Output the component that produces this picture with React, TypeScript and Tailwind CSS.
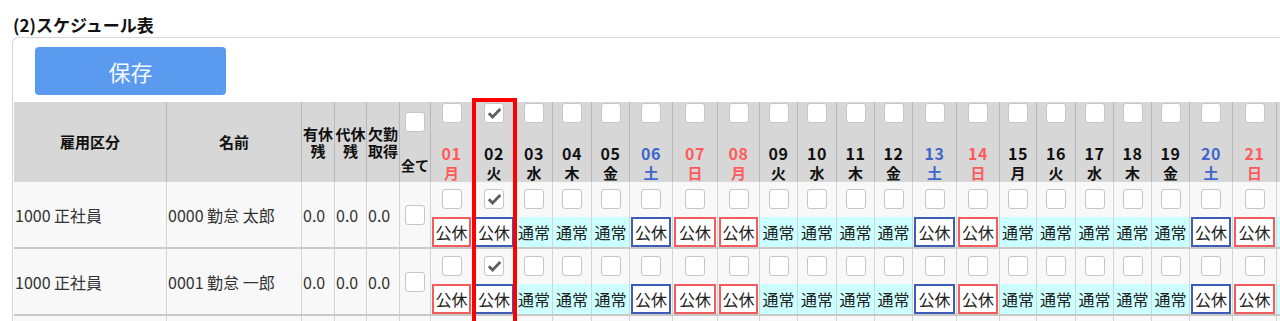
import React from "react";

type Kind = "red" | "blue" | "normal";
type Day = { d: string; w: string; color: string; kind: Kind; width: string; checked?: boolean };

const days: Day[] = [
  { d: "01", w: "月", color: "text-[#ff5a5a]", kind: "red", width: "w-[42px]" },
  { d: "02", w: "火", color: "text-[#111111]", kind: "blue", width: "w-[43px]", checked: true },
  { d: "03", w: "水", color: "text-[#111111]", kind: "normal", width: "w-[37px]" },
  { d: "04", w: "木", color: "text-[#111111]", kind: "normal", width: "w-[39px]" },
  { d: "05", w: "金", color: "text-[#111111]", kind: "normal", width: "w-[38px]" },
  { d: "06", w: "土", color: "text-[#3d66cc]", kind: "blue", width: "w-[43px]" },
  { d: "07", w: "日", color: "text-[#ff5a5a]", kind: "red", width: "w-[45px]" },
  { d: "08", w: "月", color: "text-[#ff5a5a]", kind: "red", width: "w-[42px]" },
  { d: "09", w: "火", color: "text-[#111111]", kind: "normal", width: "w-[38px]" },
  { d: "10", w: "水", color: "text-[#111111]", kind: "normal", width: "w-[39px]" },
  { d: "11", w: "木", color: "text-[#111111]", kind: "normal", width: "w-[38px]" },
  { d: "12", w: "金", color: "text-[#111111]", kind: "normal", width: "w-[38px]" },
  { d: "13", w: "土", color: "text-[#3d66cc]", kind: "blue", width: "w-[44px]" },
  { d: "14", w: "日", color: "text-[#ff5a5a]", kind: "red", width: "w-[43px]" },
  { d: "15", w: "月", color: "text-[#111111]", kind: "normal", width: "w-[37px]" },
  { d: "16", w: "火", color: "text-[#111111]", kind: "normal", width: "w-[39px]" },
  { d: "17", w: "水", color: "text-[#111111]", kind: "normal", width: "w-[38px]" },
  { d: "18", w: "木", color: "text-[#111111]", kind: "normal", width: "w-[38px]" },
  { d: "19", w: "金", color: "text-[#111111]", kind: "normal", width: "w-[38px]" },
  { d: "20", w: "土", color: "text-[#3d66cc]", kind: "blue", width: "w-[43px]" },
  { d: "21", w: "日", color: "text-[#ff5a5a]", kind: "red", width: "w-[44px]" },
  { d: "22", w: "月", color: "text-[#111111]", kind: "normal", width: "w-[38px]" },
];

const rows = [
  { kbn: "1000 正社員", name: "0000 勤怠 太郎" },
  { kbn: "1000 正社員", name: "0001 勤怠 一郎" },
];

function Check({ checked }: { checked?: boolean }) {
  return (
    <div className="w-[20px] h-[20px] shrink-0 bg-white border border-[#c6c6c6] rounded-[3px] flex items-center justify-center">
      {checked && (
        <svg width="15" height="13" viewBox="0 0 15 13">
          <path d="M0.8 7.2 L2.9 5.2 L5.6 7.9 L12.2 1 L14.3 3 L5.6 11.9 Z" fill="#5e5e5e" />
        </svg>
      )}
    </div>
  );
}

export default function App() {
  return (
    <div className="w-[1280px] h-[321px] overflow-hidden bg-white relative font-['Noto_Sans_CJK_JP','Noto_Sans',sans-serif] text-[#333]">
      <div className="pl-[13px] pt-[13px] h-[37px] text-[17px] font-bold leading-[24px] text-[#111]">(2)スケジュール表</div>
      <div className="ml-[12px] border-l border-t border-[#d6d6d6] rounded-tl-[6px] w-[1300px]">
        <div className="pt-[9px] pl-[22px] pb-[7px]">
          <div className="w-[191px] h-[48px] bg-[#5b9bef] rounded-[4px] flex items-center justify-center text-[22px] text-[#f4f8ff]">
            保存
          </div>
        </div>
        <div className="ml-[1px]">
          {/* header */}
          <div className="flex h-[80px] bg-[#d6d7d6] text-[15px] font-bold text-[#111]">
            <div className="w-[153px] shrink-0 border-r border-[#b8b8b8] flex items-center justify-center">雇用区分</div>
            <div className="w-[135px] shrink-0 border-r border-[#b8b8b8] flex items-center justify-center">名前</div>
            <div className="w-[33px] shrink-0 border-r border-[#b8b8b8] flex flex-col items-center justify-center leading-[17px]">
              <span>有休</span>
              <span>残</span>
            </div>
            <div className="w-[32px] shrink-0 border-r border-[#b8b8b8] flex flex-col items-center justify-center leading-[17px]">
              <span>代休</span>
              <span>残</span>
            </div>
            <div className="w-[33px] shrink-0 border-r border-[#b8b8b8] flex flex-col items-center justify-center leading-[17px]">
              <span>欠勤</span>
              <span>取得</span>
            </div>
            <div className="w-[31px] shrink-0 border-r border-[#b8b8b8] flex flex-col items-center pt-[10px] whitespace-nowrap">
              <Check />
              <span className="mt-[24px] leading-[19px] text-[14px]">全て</span>
            </div>
            {days.map((d) => (
              <div
                key={d.d}
                className={`${d.width} shrink-0 border-r border-[#b8b8b8] flex flex-col items-center justify-between`}
              >
                <div className="mt-[1px]">
                  <Check checked={d.checked} />
                </div>
                <div className={`flex flex-col items-center leading-[19px] ${d.color}`}>
                  <span className="text-[16px] tracking-[0.5px]">{d.d}</span>
                  <span className="text-[15px]">{d.w}</span>
                </div>
              </div>
            ))}
          </div>
          {/* body */}
          {rows.map((r, i) => (
            <div key={i} className="flex h-[67px] bg-[#f8f8f8] border-b-2 border-[#c8c8c8] text-[16px]">
              <div className="w-[153px] shrink-0 border-r border-[#d3d3d3] flex items-center pl-[1px] whitespace-nowrap">{r.kbn}</div>
              <div className="w-[135px] shrink-0 border-r border-[#d3d3d3] flex items-center pl-[1px] whitespace-nowrap">{r.name}</div>
              <div className="w-[33px] shrink-0 border-r border-[#d3d3d3] flex items-center pl-[1px]">0.0</div>
              <div className="w-[32px] shrink-0 border-r border-[#d3d3d3] flex items-center pl-[1px]">0.0</div>
              <div className="w-[33px] shrink-0 border-r border-[#d3d3d3] flex items-center pl-[1px]">0.0</div>
              <div className="w-[31px] shrink-0 border-r border-[#d3d3d3] flex items-center justify-center">
                <Check />
              </div>
              {days.map((d) => (
                <div key={d.d} className={`${d.width} shrink-0 border-r border-[#d3d3d3] flex flex-col items-center`}>
                  <div className="mt-[7px]">
                    <Check checked={d.checked} />
                  </div>
                  <div className="mt-[8px] w-full h-[30px] flex">
                    {d.kind === "normal" ? (
                      <div className="w-full h-full bg-[#ccffff] flex items-center justify-center text-[#222] whitespace-nowrap">通常</div>
                    ) : (
                      <div
                        className={`w-full h-full mx-[1px] bg-white border-2 flex items-center justify-center text-[#222] whitespace-nowrap ${
                          d.kind === "red" ? "border-[#f25c5c]" : "border-[#3b5db8]"
                        }`}
                      >
                        公休
                      </div>
                    )}
                  </div>
                </div>
              ))}
            </div>
          ))}
          <div className="flex h-[20px] bg-[#f8f8f8]">
            <div className="w-[153px] shrink-0 border-r border-[#d3d3d3]" />
            <div className="w-[135px] shrink-0 border-r border-[#d3d3d3]" />
            <div className="w-[33px] shrink-0 border-r border-[#d3d3d3]" />
            <div className="w-[32px] shrink-0 border-r border-[#d3d3d3]" />
            <div className="w-[33px] shrink-0 border-r border-[#d3d3d3]" />
            <div className="w-[31px] shrink-0 border-r border-[#d3d3d3]" />
            {days.map((d) => (
              <div key={d.d} className={`${d.width} shrink-0 border-r border-[#d3d3d3]`} />
            ))}
          </div>
        </div>
      </div>
      {/* annotation highlight */}
      <div className="absolute left-[472px] top-[98px] w-[45px] h-[240px] border-[4px] border-[#ff0000] pointer-events-none" />
    </div>
  );
}
